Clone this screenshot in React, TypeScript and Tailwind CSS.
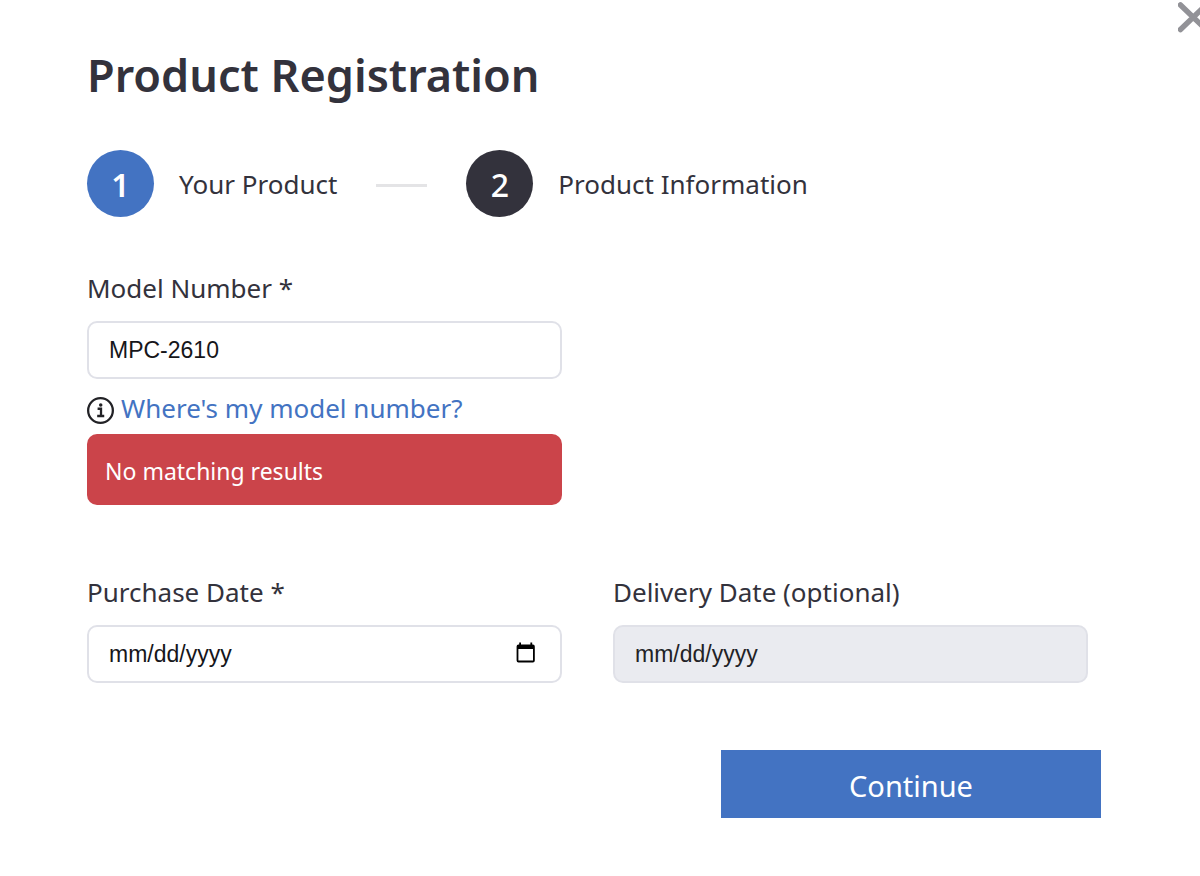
import { useState } from "react";

const field = "h-[58px] w-full rounded-[10px] border-2 border-[#e0e1e8] px-5 font-['Liberation_Sans',sans-serif] text-[23px] text-[#16161a] outline-none";

function Step({ n, label, active }: { n: number; label: string; active?: boolean }) {
  return (
    <li className="flex items-center gap-[25px]">
      <span className={`flex size-[67px] items-center justify-center rounded-full pt-0.5 text-[32px] text-white ${active ? "bg-[#4373c2] font-semibold" : "bg-[#33323c] font-medium"}`}>{n}</span>
      <span className="pt-0.5 text-[26px]">{label}</span>
    </li>
  );
}

export default function App() {
  const [model, setModel] = useState("MPC-2610");
  const [date, setDate] = useState("");
  return (
    <main className="relative overflow-hidden bg-white px-[87px] pt-[43px] pb-[57px] font-['Noto_Sans',sans-serif] text-[#33323c]">
      <button type="button" aria-label="Close" className="absolute top-[1px] -right-[10px]">
        <svg width="32" height="32" viewBox="0 0 32 32" fill="none" stroke="#929297" strokeWidth="5.5" strokeLinecap="round">
          <path d="M2.500 4 L28 28.500 M28 4 L2.500 28.500" />
        </svg>
      </button>
      <h1 className="text-[45px] leading-[64px] font-semibold">Product Registration</h1>
      <ol className="mt-[43px] flex items-center gap-[39px]">
        <Step n={1} label="Your Product" active />
        <li aria-hidden="true" className="mt-[3px] h-[3px] w-[51px] bg-[#e4e4e6]" />
        <Step n={2} label="Product Information" />
      </ol>
      <form onSubmit={(e) => e.preventDefault()}>
        <div className="mt-[51px] grid grid-cols-[minmax(0,475px)_minmax(0,475px)] gap-x-[51px]">
          <div>
            <label htmlFor="model" className="block text-[26px] leading-[40px]">Model Number *</label>
            <input id="model" value={model} onChange={(e) => setModel(e.target.value)} className={`${field} mt-[13px] bg-white`} />
            <a href="#model" className="mt-[9px] flex h-[40px] items-center gap-[7px] text-[26px] text-[#4373c2]">
              <svg className="mt-1" width="27" height="27" viewBox="0 0 26 26" fill="none" stroke="#222226" strokeWidth="2.200">
                <circle cx="13" cy="13" r="11.900" />
                <path d="M10.200 11.300h3.300v6.800M9.800 18.300h6.800" />
                <circle cx="13.200" cy="7.700" r="1.700" fill="#222226" stroke="none" />
              </svg>
              Where's my model number?
            </a>
            <p role="alert" className="mt-[6px] flex h-[71px] items-center rounded-[10px] bg-[#cb444a] px-[18px] pt-1 text-[23px] text-white">No matching results</p>
          </div>
        </div>
        <div className="mt-[67px] grid grid-cols-[minmax(0,475px)_minmax(0,475px)] gap-x-[51px]">
          <div>
            <label htmlFor="purchase" className="block text-[26px] leading-[40px]">Purchase Date *</label>
            <div className="relative mt-[13px]">
              <input id="purchase" placeholder="mm/dd/yyyy" value={date} onChange={(e) => setDate(e.target.value)} className={`${field} bg-white placeholder:text-[#16161a]`} />
              <button type="button" aria-label="Open calendar" className="absolute top-[17px] right-[26px]">
                <svg width="20" height="22" viewBox="0 0 20 22" fill="none" stroke="#000" strokeWidth="1.800">
                  <rect x="1.500" y="3.500" width="16.400" height="16" rx="1" />
                  <path d="M1.500 3h16.400v4H1.500z" fill="#000" stroke="none" />
                  <path d="M4.100 0.500v4M15.300 0.500v4" />
                </svg>
              </button>
            </div>
          </div>
          <div>
            <label htmlFor="delivery" className="block text-[26px] leading-[40px]">Delivery Date (optional)</label>
            <input id="delivery" disabled placeholder="mm/dd/yyyy" className={`${field} mt-[13px] bg-[#eaebf0] placeholder:text-[#222226]`} />
          </div>
        </div>
        <div className="mt-[67px] flex max-w-[1014px] justify-end">
          <button type="submit" className="h-[68px] w-[380px] bg-[#4373c2] pt-1 text-[29px] text-white">Continue</button>
        </div>
      </form>
    </main>
  );
}
